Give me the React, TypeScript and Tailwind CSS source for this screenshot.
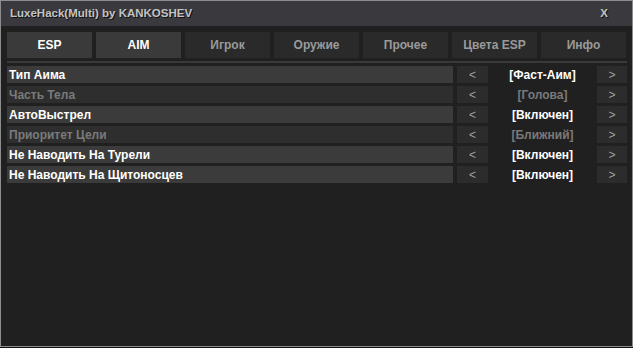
import React from "react";

const TABS = ["ESP", "AIM", "Игрок", "Оружие", "Прочее", "Цвета ESP", "Инфо"];
const ACTIVE_TABS = ["ESP", "AIM"];

type Option = { label: string; value: string; on: boolean };

const OPTIONS: Option[] = [
  { label: "Тип Аима", value: "[Фаст-Аим]", on: true },
  { label: "Часть Тела", value: "[Голова]", on: false },
  { label: "АвтоВыстрел", value: "[Включен]", on: true },
  { label: "Приоритет Цели", value: "[Ближний]", on: false },
  { label: "Не Наводить На Турели", value: "[Включен]", on: true },
  { label: "Не Наводить На Щитоносцев", value: "[Включен]", on: true },
];

const FONT = "font-['Liberation_Sans',Arial,sans-serif]";

function Arrow({ children, wide = false }: { children: React.ReactNode; wide?: boolean }) {
  return (
    <div
      className={`flex h-[17px] shrink-0 items-center justify-center bg-[#2c2c2c] text-[12px] text-[#a0a0a0] ${
        wide ? "w-[31px]" : "w-[30px]"
      }`}
    >
      {children}
    </div>
  );
}

export default function App() {
  return (
    <div className={`h-[348px] w-[633px] bg-[#111] ${FONT}`}>
      <div className="flex h-[347px] w-[633px] flex-col border border-[#8d8d8d] bg-[#202020]">
        <div className="flex h-[25px] shrink-0 items-center justify-between bg-[#3a3a3e] pl-[9px] pr-[24px]">
          <span className="text-[11.5px] font-bold text-[#c4c4c4] [text-shadow:1px_1px_0_#111]">
            LuxeHack(Multi) by KANKOSHEV
          </span>
          <span className="text-[11.5px] font-bold text-[#c4c4c4] [text-shadow:1px_1px_0_#111]">X</span>
        </div>

        <div className="flex flex-col pl-[6px] pr-[5px] pt-[6px]">
          <div className="flex h-[26px] gap-[4px]">
            {TABS.map((tab) => {
              const active = ACTIVE_TABS.includes(tab);
              return (
                <div
                  key={tab}
                  className={`flex w-[85px] items-center justify-center text-[12px] font-bold ${
                    active ? "bg-[#3a3a3a] text-white" : "bg-[#2a2a2a] text-[#9a9a9a]"
                  }`}
                >
                  {tab}
                </div>
              );
            })}
          </div>
          <div className="mt-[3px] h-[2px] w-[620px] bg-[#393939]" />

          <div className="mt-[3px] flex flex-col gap-[3px]">
            {OPTIONS.map((opt) => (
              <div key={opt.label} className="flex h-[17px] items-center">
                <div
                  className={`flex h-[17px] w-[446px] shrink-0 items-center pl-[2px] text-[12px] font-bold ${
                    opt.on ? "bg-[#3b3b3b] text-white" : "bg-[#2e2e2e] text-[#7a7a7a]"
                  }`}
                >
                  {opt.label}
                </div>
                <div className="ml-[4px]">
                  <Arrow wide>&lt;</Arrow>
                </div>
                <div
                  className={`flex w-[109px] shrink-0 items-center justify-center text-[12px] font-bold ${
                    opt.on ? "text-white" : "text-[#7a7a7a]"
                  }`}
                >
                  {opt.value}
                </div>
                <Arrow>&gt;</Arrow>
              </div>
            ))}
          </div>
        </div>
      </div>
    </div>
  );
}
